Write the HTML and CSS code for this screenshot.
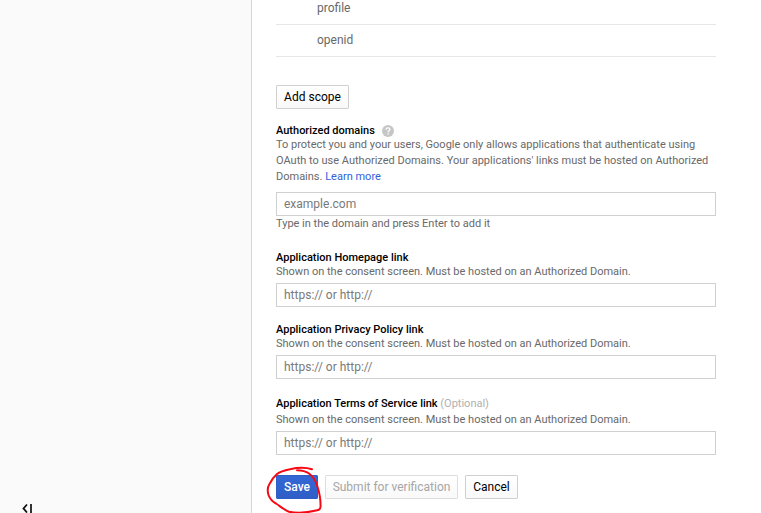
FILE: index.html
```html
<!DOCTYPE html>
<html lang="en">
<head>
<meta charset="utf-8">
<title>OAuth consent screen</title>
<link rel="stylesheet" href="styles.css">
</head>
<body>
<div class="page">
  <aside class="sidebar">
    <svg class="collapse" width="12" height="12" viewBox="0 0 12 12"><path d="M6 1.500 2.500 5.500l3.500 4" fill="none" stroke="#111" stroke-width="1.8"/><path d="M10 1v11" stroke="#333" stroke-width="2"/></svg>
  </aside>
  <main class="content">
    <ul class="scopes">
      <li class="scope">profile</li>
      <li class="scope">openid</li>
    </ul>
    <button class="btn add">Add scope</button>

    <section class="field domains">
      <h3 class="label">Authorized domains<svg class="help" width="12" height="12" viewBox="0 0 12 12"><circle cx="6" cy="6" r="6" fill="#c6c6c6"/><path d="M4.100 4.700C4.100 3.500 4.900 2.800 6 2.800s1.900.7 1.900 1.700C7.900 5.700 6.100 5.800 6.100 7.300" fill="none" stroke="#fff" stroke-width="1.3"/><path d="M5.400 8.200h1.400v1.400H5.400z" fill="#fff"/></svg></h3>
      <p class="desc">To protect you and your users, Google only allows applications that authenticate using<br>OAuth to use Authorized Domains. Your applications' links must be hosted on Authorized<br>Domains. <a class="link">Learn more</a></p>
      <input class="input" placeholder="example.com">
      <p class="desc hint">Type in the domain and press Enter to add it</p>
    </section>

    <section class="field home">
      <h3 class="label">Application Homepage link</h3>
      <p class="desc">Shown on the consent screen. Must be hosted on an Authorized Domain.</p>
      <input class="input" placeholder="https:// or http://">
    </section>

    <section class="field privacy">
      <h3 class="label">Application Privacy Policy link</h3>
      <p class="desc">Shown on the consent screen. Must be hosted on an Authorized Domain.</p>
      <input class="input" placeholder="https:// or http://">
    </section>

    <section class="field terms">
      <h3 class="label">Application Terms of Service link <span class="optional">(Optional)</span></h3>
      <p class="desc">Shown on the consent screen. Must be hosted on an Authorized Domain.</p>
      <input class="input" placeholder="https:// or http://">
    </section>

    <div class="actions">
      <div class="save-wrap">
        <button class="btn primary">Save</button>
        <svg class="scribble" width="60" height="50" viewBox="0 0 60 50"><path d="M50 7.300C45 5.700 36 5.500 28 7.200C22 8.300 18 9.500 15 12C11 15.500 9 19 7.500 22C5.500 25 5.300 29 6.500 33C8 37 10 39.500 14 41.500C18 44 22 48 27 49.700C35 51.300 46 50.500 54 48.500C57 48 58.500 47.500 58.600 44C58.600 36 57 29 55 23C53 17 51 14.500 47 11.500C43 8.500 40 8.200 35 8.200" fill="none" stroke="#f50a14" stroke-width="2" stroke-linecap="round"/></svg>
      </div>
      <button class="btn submit" disabled>Submit for verification</button>
      <button class="btn cancel">Cancel</button>
    </div>
  </main>
</div>
</body>
</html>
```
FILE: styles.css
```css
* { box-sizing: border-box; }
body { margin: 0; font-family: Roboto, sans-serif; color: #000; background: #fff; }
.page { display: flex; height: 513px; overflow: hidden; }
.sidebar {
  width: 252px;
  flex: none;
  display: flex;
  align-items: flex-end;
  padding-left: 21px;
  background: #fafafa;
  border-right: 1px solid #d8d8d8;
}
.collapse { display: block; margin-bottom: -2px; }
.content { width: 464px; padding-left: 24px; }
.scopes { list-style: none; margin: -7px 0 28px; padding: 0; }
.scope {
  height: 32px;
  line-height: 30px;
  padding-left: 41px;
  font-size: 12px;
  color: #696969;
  border-bottom: 1px solid #e7e7e7;
}
.btn {
  display: block;
  height: 24px;
  padding: 0;
  font: 12px/22px Roboto, sans-serif;
  color: #000;
  text-align: center;
  background: linear-gradient(#fff, #f9f9f9);
  border: 1px solid #d0d0d0;
  border-radius: 1px;
}
.add { width: 73px; }
.field { display: flex; flex-direction: column; }
.domains { margin-top: 15px; }
.home { margin-top: 19px; }
.privacy { margin-top: 16px; }
.terms { margin-top: 18px; }
.label {
  display: flex;
  align-items: center;
  height: 14px;
  margin: 0;
  font-size: 11px;
  font-weight: 500;
  line-height: 14px;
  white-space: pre;
}
.help { margin: -1px 0 0 7px; }
.optional { font-weight: 400; color: #b0b0b0; }
.desc { margin: -1px 0 0; font-size: 11px; line-height: 16px; color: #696969; white-space: nowrap; }
.domains .hint { margin-top: 0; }
.terms .desc { margin-top: 1px; }
.link { color: #3360dc; }
.input {
  width: 440px;
  height: 24px;
  margin: 3px 0 0;
  padding: 0 7px;
  font: 12px/22px Roboto, sans-serif;
  background: #fff;
  border: 1px solid #d0d0d0;
  border-radius: 0;
}
.domains .input { margin-top: 7px; }
.input::placeholder { color: #7a7a7a; opacity: 1; }
.actions { display: flex; gap: 7px; margin-top: 20px; }
.save-wrap { position: relative; }
.scribble { position: absolute; left: -14px; top: -13px; overflow: visible; }
.primary {
  width: 42px;
  font-weight: 500;
  color: #fff;
  background: linear-gradient(#3367d6, #2f5fc6);
  border-color: #2f5fc6;
}
.submit { width: 133px; color: #a6a6a6; border-color: #dedede; }
.cancel { width: 53px; }
```
